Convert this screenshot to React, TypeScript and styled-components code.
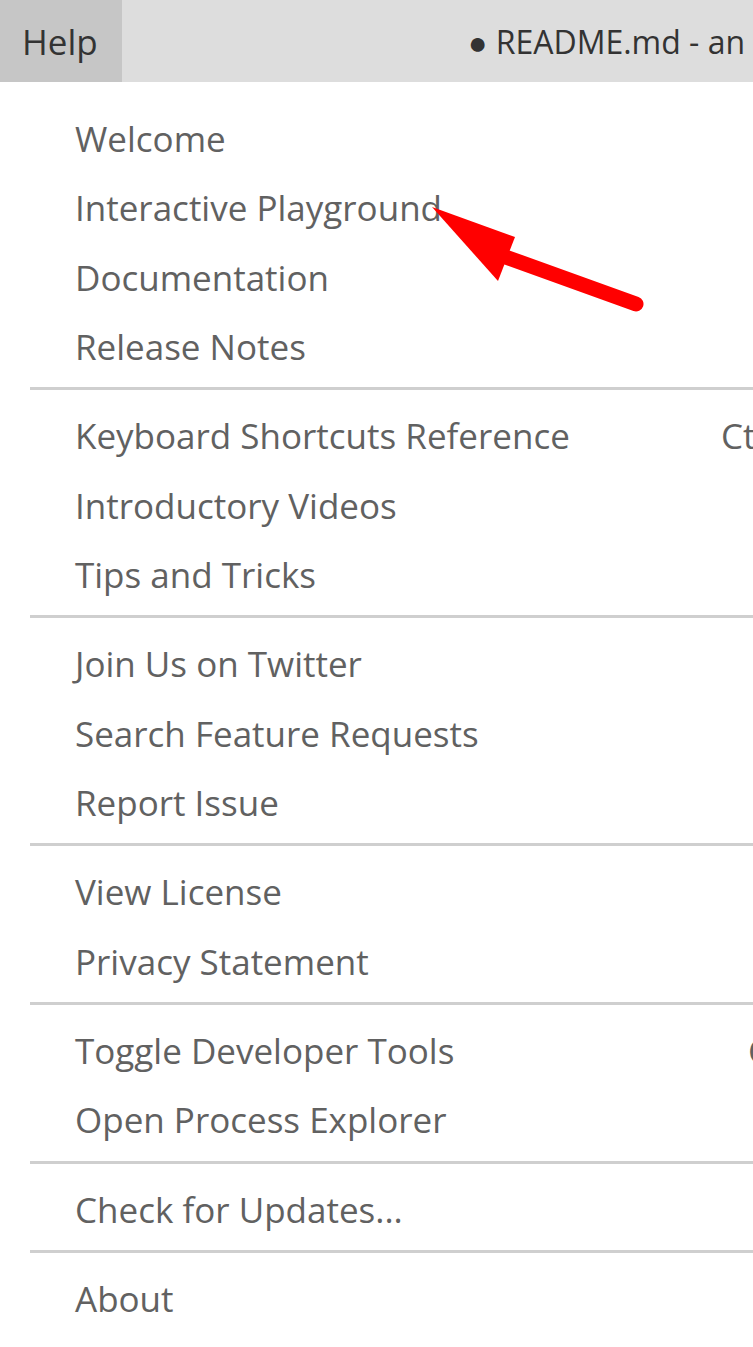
import React from "react";
import styled, { createGlobalStyle } from "styled-components";

const Global = createGlobalStyle`
  html, body { margin: 0; padding: 0; background: #ffffff; overflow: hidden; }
  body { font-family: "Open Sans", "Noto Sans", sans-serif; }
`;

const Page = styled.div`
  position: relative;
  width: 753px;
  height: 1347px;
  overflow: hidden;
  background: #ffffff;
`;

const TitleBar = styled.div`
  display: flex;
  align-items: stretch;
  height: 82px;
  background: #dddddd;
  color: #333333;
  font-size: 35px;
  white-space: nowrap;
`;

const MenuTitle = styled.div`
  display: flex;
  align-items: center;
  flex: 0 0 122px;
  width: 122px;
  padding-left: 22px;
  box-sizing: border-box;
  background: #c6c6c6;
`;

const WindowTitle = styled.div`
  display: flex;
  align-items: center;
  flex: 0 0 auto;
  padding-left: 346px;
  font-size: 32px;
`;

const Menu = styled.div`
  width: 1000px;
  padding: 22px 0;
  color: #616161;
  font-size: 35px;
`;

const Row = styled.div`
  position: relative;
  display: flex;
  align-items: center;
  height: 69.33px;
  padding: 0 60px 0 75px;
  white-space: nowrap;
`;

const Label = styled.span`
  flex: 1 1 auto;
`;

const KeyCell = styled.span<{ $x: number }>`
  position: absolute;
  left: ${(p) => p.$x}px;
`;

const Separator = styled.div`
  height: 20px;
  margin: 0 0 0 30px;
  box-sizing: border-box;
  padding-top: 6px;
  &::after {
    content: "";
    display: block;
    height: 3px;
    background: #cfcfcf;
  }
`;

const Arrow = styled.svg`
  position: absolute;
  left: 0;
  top: 0;
  pointer-events: none;
`;

type Entry = { label: string; key?: string; keyX?: number } | "sep";

const entries: Entry[] = [
  { label: "Welcome" },
  { label: "Interactive Playground" },
  { label: "Documentation" },
  { label: "Release Notes" },
  "sep",
  { label: "Keyboard Shortcuts Reference", key: "Ctrl+K Ctrl+R", keyX: 721 },
  { label: "Introductory Videos" },
  { label: "Tips and Tricks" },
  "sep",
  { label: "Join Us on Twitter" },
  { label: "Search Feature Requests" },
  { label: "Report Issue" },
  "sep",
  { label: "View License" },
  { label: "Privacy Statement" },
  "sep",
  { label: "Toggle Developer Tools", key: "Ctrl+Shift+I", keyX: 748 },
  { label: "Open Process Explorer" },
  "sep",
  { label: "Check for Updates..." },
  "sep",
  { label: "About" },
];

export default function App() {
  return (
    <Page>
      <Global />
      <TitleBar>
        <MenuTitle>Help</MenuTitle>
        <WindowTitle>● README.md - an</WindowTitle>
      </TitleBar>
      <Menu>
        {entries.map((e, i) =>
          e === "sep" ? (
            <Separator key={i} />
          ) : (
            <Row key={i}>
              <Label>{e.label}</Label>
              {e.key && <KeyCell $x={e.keyX ?? 0}>{e.key}</KeyCell>}
            </Row>
          )
        )}
      </Menu>
      <Arrow width="753" height="1347" viewBox="0 0 753 1347">
        <line x1="636" y1="304" x2="500" y2="255" stroke="#ff0000" strokeWidth="15" strokeLinecap="round" />
        <polygon points="432,207 515,237 498,281" fill="#ff0000" />
      </Arrow>
    </Page>
  );
}
